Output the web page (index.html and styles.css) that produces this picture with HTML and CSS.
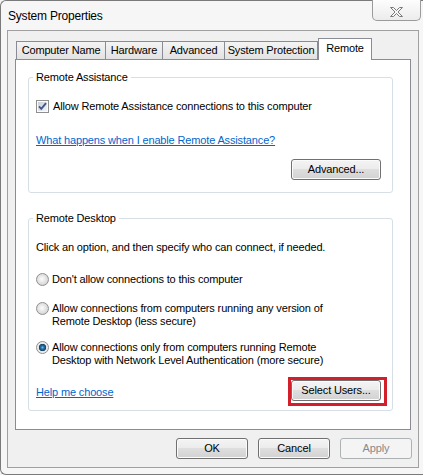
FILE: index.html
```html
<!DOCTYPE html>
<html lang="en">
<head>
<meta charset="utf-8">
<title>System Properties</title>
<link rel="stylesheet" href="styles.css">
</head>
<body>
<div class="window">
  <div class="titlebar">
    <span class="title">System Properties</span>
    <button class="close" aria-label="Close">
      <svg class="close-x" width="13" height="10" viewBox="-0.5 -0.5 13 10">
        <polygon points="0,0 3,0 6,3 9,0 12,0 7.5,4.5 12,9 9,9 6,6 3,9 0,9 4.5,4.5" fill="#f7f7f7" stroke="#7a7a7a" stroke-width="1" stroke-linejoin="round"/>
      </svg>
    </button>
  </div>
  <div class="client">
    <div class="tabs">
      <div class="tab t1">Computer Name</div>
      <div class="tab t2">Hardware</div>
      <div class="tab t3">Advanced</div>
      <div class="tab t4">System Protection</div>
      <div class="tab t5 sel">Remote</div>
    </div>
    <div class="panel">
      <fieldset class="group g1">
        <legend>Remote Assistance</legend>
        <div class="gb-body">
          <label class="check-row">
            <svg class="checkbox" width="13" height="13" viewBox="0 0 13 13">
              <defs>
                <linearGradient id="cbg" x1="0" y1="0" x2="1" y2="1">
                  <stop offset="0" stop-color="#c9ced6"/>
                  <stop offset="1" stop-color="#f4f5f7"/>
                </linearGradient>
              </defs>
              <rect x="0.5" y="0.5" width="12" height="12" fill="#fdfdfd" stroke="#8e8f8f"/>
              <rect x="2" y="2" width="9" height="9" fill="url(#cbg)"/>
              <path d="M3 6.3 L5.3 8.8 L10 3.2" stroke="#3f5687" stroke-width="1.9" fill="none"/>
            </svg>
            <span>Allow Remote Assistance connections to this computer</span>
          </label>
          <a class="link ra-link" href="#">What happens when I enable Remote Assistance?</a>
          <div class="btn-row"><button class="btn wide">Advanced...</button></div>
        </div>
      </fieldset>
      <fieldset class="group g2">
        <legend>Remote Desktop</legend>
        <div class="gb-body">
          <p class="intro">Click an option, and then specify who can connect, if needed.</p>
          <div class="radio-row r1"><span class="radio"></span><span>Don't allow connections to this computer</span></div>
          <div class="radio-row r2"><span class="radio"></span><span>Allow connections from computers running any version of<br>Remote Desktop (less secure)</span></div>
          <div class="radio-row r3"><span class="radio on"></span><span>Allow connections only from computers running Remote<br>Desktop with Network Level Authentication (more secure)</span></div>
          <div class="rd-footer">
            <a class="link help" href="#">Help me choose</a>
            <span class="highlight"><button class="btn wide">Select Users...</button></span>
          </div>
        </div>
      </fieldset>
    </div>
    <div class="dlg-buttons">
      <button class="btn">OK</button>
      <button class="btn">Cancel</button>
      <button class="btn" disabled>Apply</button>
    </div>
  </div>
</div>
</body>
</html>
```
FILE: styles.css
```css
* { box-sizing: border-box; }
html, body { margin: 0; padding: 0; }
body {
  width: 423px;
  height: 475px;
  overflow: hidden;
  background: #f4f4f4;
  font-family: "Liberation Sans", Arial, sans-serif;
  font-size: 11px;
  letter-spacing: -0.15px;
  color: #000;
}
.window {
  width: 423px;
  height: 475px;
  border: 1px solid #7a7a7a;
  border-right: none;
  border-radius: 6px 0 0 6px;
  background: #f6f6f6;
  display: flex;
  flex-direction: column;
}
.titlebar {
  height: 29px;
  display: flex;
  align-items: flex-start;
  justify-content: space-between;
  flex: none;
}
.title {
  margin: 8px 0 0 7px;
  font-size: 12px;
  line-height: 14px;
  letter-spacing: -0.2px;
}
.close {
  width: 49px;
  height: 21px;
  margin: -1px 2px 0 0;
  padding: 0;
  border: 1px solid #9b9b9b;
  border-top: none;
  border-radius: 0 0 5px 5px;
  background: linear-gradient(#fdfdfd, #ececec);
  display: flex;
  align-items: center;
  justify-content: center;
}
.close-x { margin-top: 4px; }
.client {
  margin-left: 6px;
  width: 412px;
  height: 438px;
  border: 1px solid #a0a0a0;
  background: #f0f0f0;
  padding-top: 7px;
  display: flex;
  flex-direction: column;
  flex: none;
}
.tabs {
  display: flex;
  align-items: flex-end;
  height: 21px;
  margin-left: 8px;
}
.tab {
  height: 18px;
  border: 1px solid #898c95;
  border-bottom: none;
  background: linear-gradient(#f4f4f4, #e2e2e2);
  text-align: center;
  line-height: 16px;
  margin-left: -1px;
  white-space: nowrap;
}
.tab.t1 { margin-left: 0; width: 90px; }
.tab.t2 { width: 58px; }
.tab.t3 { width: 63px; }
.tab.t4 { width: 94px; }
.tab.t5 { width: 54px; }
.tab.sel {
  height: 22px;
  margin-left: 0;
  margin-bottom: -1px;
  padding-top: 2px;
  line-height: 14px;
  background: #fff;
  position: relative;
  z-index: 1;
}
.panel {
  margin-left: 7px;
  width: 396px;
  height: 371px;
  border: 1px solid #898c95;
  background: #fff;
  padding-top: 10px;
}
.group {
  margin: 0 17px 0 12px;
  border: 1px solid #d5dfe5;
  border-radius: 3px;
  padding: 0 11px 12px 4px;
  min-width: 0;
}
.group legend {
  padding: 0 3px;
  line-height: 14px;
}
.g2 {
  margin-top: 18px;
  padding-right: 5px;
  padding-bottom: 4px;
}
.gb-body {
  padding-left: 3px;
  line-height: 13px;
}
.check-row {
  display: flex;
  align-items: center;
  gap: 4px;
  height: 13px;
  margin-top: 16px;
}
.checkbox { flex: none; }
.link {
  display: block;
  width: max-content;
  color: #0066cc;
  text-decoration: underline;
}
.ra-link { margin-top: 21px; }
.btn-row {
  margin-top: 12px;
  display: flex;
  justify-content: flex-end;
}
.intro { margin: 16px 0 0; }
.radio-row {
  display: flex;
  align-items: flex-start;
  gap: 3px;
}
.r1 { margin-top: 19px; }
.r2 { margin-top: 16px; }
.r3 { margin-top: 13px; }
.radio {
  flex: none;
  width: 13px;
  height: 13px;
  border-radius: 50%;
  border: 1px solid #8e8f8f;
  background: radial-gradient(circle at 45% 45%, #fdfdfd 0, #e4e4e4 45%, #c8c8c8 100%);
}
.radio.on {
  background: radial-gradient(circle at 50% 50%, #6cc0ea 0, #2877ab 1.5px, #123f66 3.4px, #e6e6e6 4px, #f3f3f3 6px);
}
.rd-footer {
  margin-top: 10px;
  display: flex;
  justify-content: space-between;
  align-items: flex-start;
}
.help { margin-top: 9px; }
.highlight {
  display: flex;
  border: 3px solid #d11f2b;
  padding: 0 3px 2px 0;
}
.btn {
  width: 72px;
  height: 21px;
  padding: 0;
  font: inherit;
  letter-spacing: inherit;
  color: #000;
  border: 1px solid #707070;
  border-radius: 3px;
  background: linear-gradient(#f4f4f4, #ececec 45%, #dedede 50%, #d2d2d2);
  box-shadow: inset 0 0 0 1px #fbfbfb;
  line-height: 19px;
  text-align: center;
}
.btn.wide { width: 90px; }
.btn:disabled {
  border-color: #adb2b5;
  background: #f4f4f4;
  color: #8a8a8a;
  box-shadow: none;
}
.dlg-buttons {
  margin-top: 8px;
  display: flex;
  justify-content: flex-end;
  gap: 10px;
  padding-right: 6px;
}
```
